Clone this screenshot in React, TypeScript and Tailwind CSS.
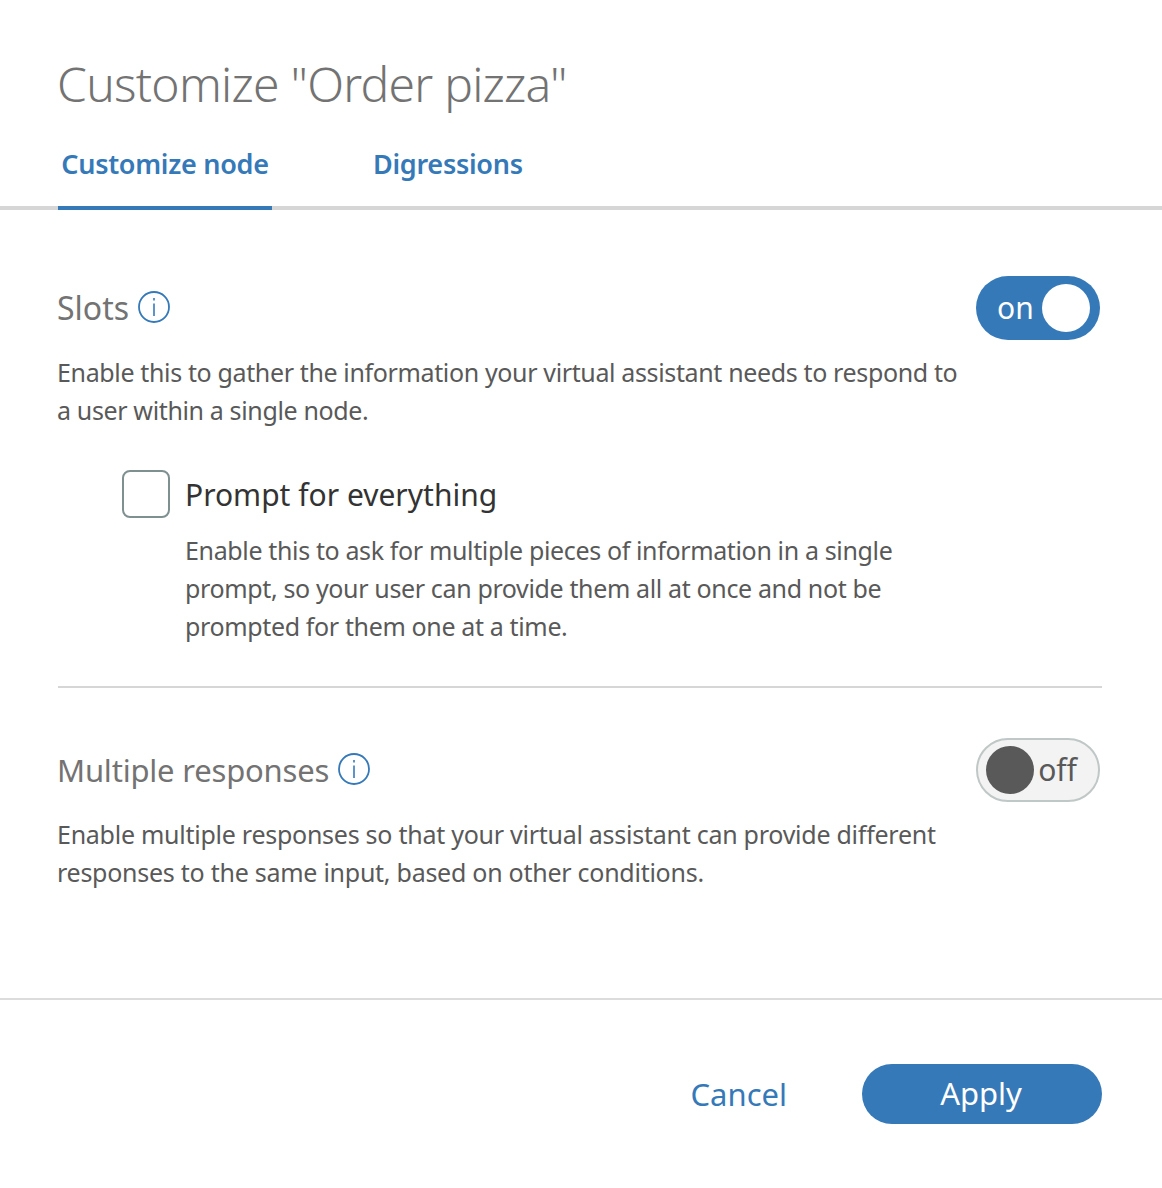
const font = { fontFamily: '"Noto Sans", "Open Sans", sans-serif' };

function InfoIcon() {
  return (
    <svg viewBox="0 0 32 32" className="mb-[3px] h-[32px] w-[32px] shrink-0" fill="none" stroke="#3579b9">
      <circle cx="16" cy="16" r="15" strokeWidth="1.8" />
      <path d="M16 12.5V25" strokeWidth="1.6" />
      <path d="M16 7v2.6" strokeWidth="1.6" />
    </svg>
  );
}

function SectionHead({ label, size }: { label: string; size: string }) {
  return (
    <div className="flex items-center gap-[9px]">
      <span className={`leading-[40px] text-[#737373] ${size}`}>{label}</span>
      <InfoIcon />
    </div>
  );
}

export default function App() {
  return (
    <div style={font} className="flex h-[1188px] w-[1162px] flex-col overflow-hidden bg-white">
      <h1 className="pl-[57px] pt-[54px] text-[48px] font-light leading-[60px] tracking-[-0.75px] text-[#737373]">
        Customize "Order pizza"
      </h1>

      <div className="mt-[16px] flex h-[80px] border-b-[4px] border-[#d6d6d6]">
        <div className="relative ml-[58px] flex h-[80px] w-[214px] shrink-0 items-start justify-center whitespace-nowrap pt-[15px] text-[27px] font-semibold leading-[38px] tracking-[-0.28px] text-[#3579b9]">
          Customize node
          <div className="absolute bottom-0 left-0 h-[4px] w-full bg-[#3579b9]" />
        </div>
        <div className="ml-[101px] whitespace-nowrap pt-[15px] text-[27px] font-semibold leading-[38px] tracking-[-0.28px] text-[#3579b9]">Digressions</div>
      </div>

      <div className="pl-[57px] pr-[62px] pt-[66px]">
        <div className="flex items-center justify-between">
          <SectionHead label="Slots" size="text-[32px]" />
          <div className="flex h-[64px] w-[124px] items-center justify-between rounded-full bg-[#3579b9] pl-[21px] pr-[10px]">
            <span className="text-[30px] leading-none text-white">on</span>
            <div className="h-[48px] w-[48px] rounded-full bg-white" />
          </div>
        </div>
        <p className="mt-[13px] w-[920px] text-[25px] leading-[38px] tracking-[-0.36px] text-[#595959]">
          Enable this to gather the information your virtual assistant needs to respond to a user within a single node.
        </p>

        <div className="mt-[41px] flex items-center gap-[15px] pl-[65px]">
          <div className="h-[48px] w-[48px] rounded-[8px] border-2 border-[#7f9090] bg-white" />
          <span className="pt-[2px] text-[30px] leading-[46px] text-[#333333]">Prompt for everything</span>
        </div>
        <p className="ml-[128px] mt-[13px] w-[760px] text-[25px] leading-[38px] tracking-[-0.36px] text-[#595959]">
          Enable this to ask for multiple pieces of information in a single prompt, so your user can provide them all at once and not be prompted for them one at a time.
        </p>

        <div className="ml-px mr-[-2px] mt-[41px] h-[2px] bg-[#d6d6d6]" />

        <div className="mt-[50px] flex items-center justify-between">
          <SectionHead label="Multiple responses" size="text-[31px] tracking-[-0.2px]" />
          <div className="flex h-[64px] w-[124px] items-center justify-between rounded-full border-2 border-[#bfc8c6] bg-[#f3f3f3] pl-[8px] pr-[21px]">
            <div className="h-[48px] w-[48px] rounded-full bg-[#595959]" />
            <span className="text-[30px] leading-none text-[#595959]">off</span>
          </div>
        </div>
        <p className="mt-[13px] w-[920px] text-[25px] leading-[38px] tracking-[-0.26px] text-[#595959]">
          Enable multiple responses so that your virtual assistant can provide different responses to the same input, based on other conditions.
        </p>
      </div>

      <div className="mt-[107px] h-[2px] bg-[#dcdcdc]" />

      <div className="flex items-center justify-end pr-[60px] pt-[64px]">
        <span className="mr-[75px] text-[31px] leading-[60px] text-[#3579b9]">Cancel</span>
        <div className="flex h-[60px] w-[240px] items-center justify-center rounded-full bg-[#3579b9] pb-[2px] pr-[2px] text-[31px] text-white">
          Apply
        </div>
      </div>
    </div>
  );
}
